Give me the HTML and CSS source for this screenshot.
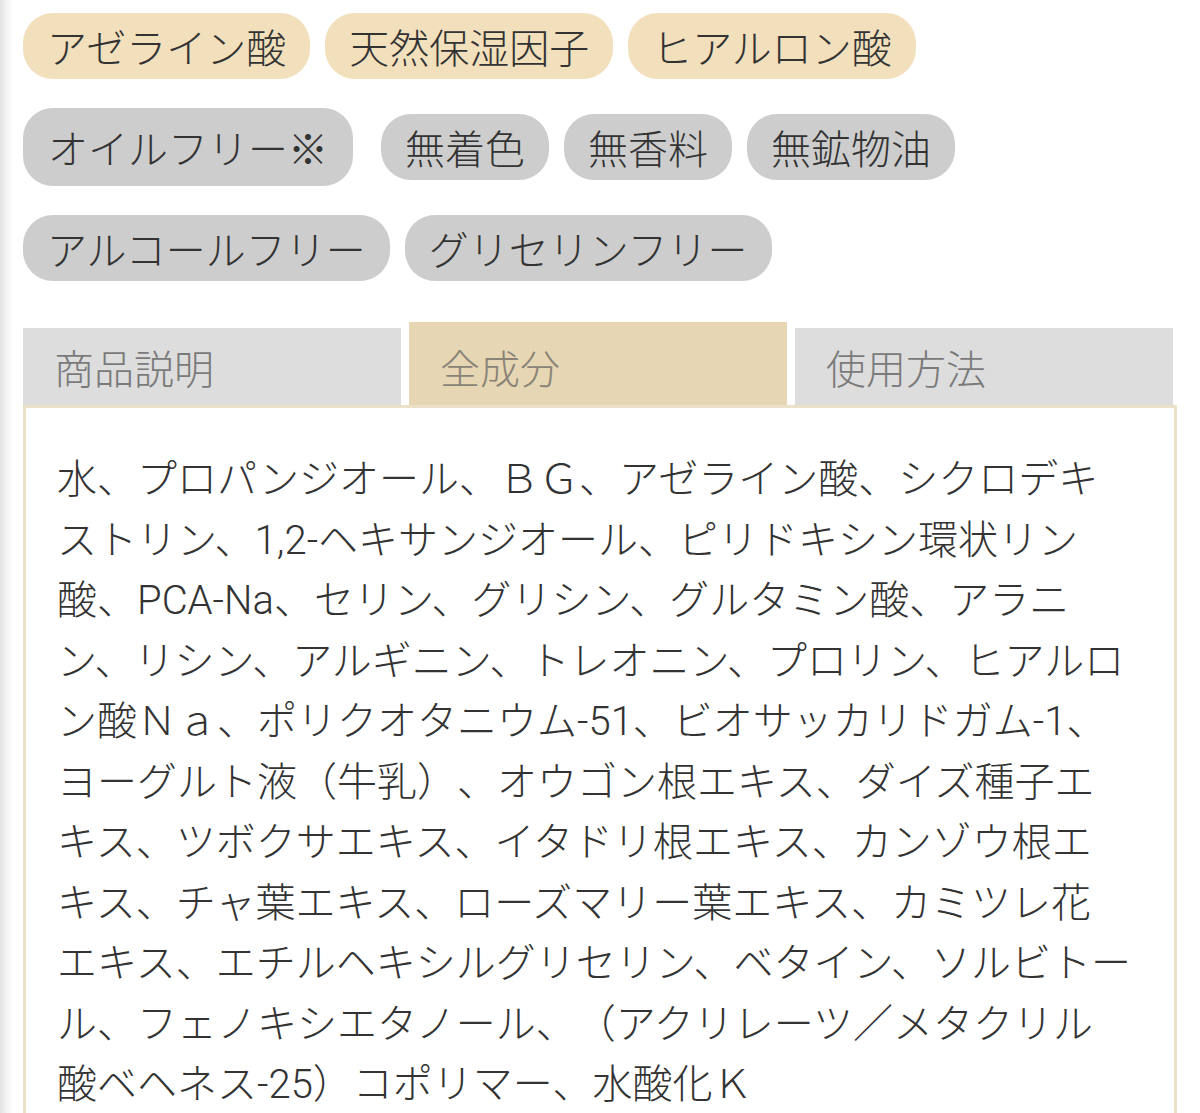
FILE: index.html
```html
<!DOCTYPE html>
<html lang="ja">
<head>
<meta charset="utf-8">
<title>全成分</title>
<link rel="stylesheet" href="styles.css">
</head>
<body>
<div class="page">
  <div class="tags">
    <div class="tag-row">
      <span class="tag tag-key">アゼライン酸</span>
      <span class="tag tag-key">天然保湿因子</span>
      <span class="tag tag-key">ヒアルロン酸</span>
    </div>
    <div class="tag-row">
      <span class="tag tag-free tag-note">オイルフリー※</span>
      <span class="tag tag-free">無着色</span>
      <span class="tag tag-free">無香料</span>
      <span class="tag tag-free">無鉱物油</span>
    </div>
    <div class="tag-row">
      <span class="tag tag-free">アルコールフリー</span>
      <span class="tag tag-free">グリセリンフリー</span>
    </div>
  </div>

  <div class="tabs">
    <div class="tab">商品説明</div>
    <div class="tab tab-active">全成分</div>
    <div class="tab">使用方法</div>
  </div>

  <div class="panel">
    <p class="ingredients">水、プロパンジオール、ＢＧ、アゼライン酸、シクロデキ<br>ストリン、1,2-ヘキサンジオール、ピリドキシン環状リン<br>酸、PCA-Na、セリン、グリシン、グルタミン酸、アラニ<br>ン、リシン、アルギニン、トレオニン、プロリン、ヒアルロ<br>ン酸Ｎａ、ポリクオタニウム-51、ビオサッカリドガム-1、<br>ヨーグルト液（牛乳）、オウゴン根エキス、ダイズ種子エ<br>キス、ツボクサエキス、イタドリ根エキス、カンゾウ根エ<br>キス、チャ葉エキス、ローズマリー葉エキス、カミツレ花<br>エキス、エチルヘキシルグリセリン、ベタイン、ソルビトー<br>ル、フェノキシエタノール、（アクリレーツ／メタクリル<br>酸ベヘネス-25）コポリマー、水酸化Ｋ</p>
  </div>
</div>
</body>
</html>
```

FILE: styles.css
```css
html, body {
  margin: 0;
  padding: 0;
}

body {
  background: linear-gradient(to right, #e2e2e2 0, #f3f3f3 6px, #ffffff 14px) no-repeat;
  background-color: #ffffff;
  font-family: "Noto Sans CJK JP", "Noto Sans", sans-serif;
  font-weight: 300;
  color: #333333;
  min-height: 1113px;
  text-spacing-trim: space-all;
}

.page {
  padding: 13px 23px 0 23px;
}

.tags {
  display: flex;
  flex-direction: column;
  gap: 29px;
}

.tag-row {
  display: flex;
  align-items: center;
  gap: 15px;
}

.tag {
  display: inline-block;
  font-size: 40px;
  line-height: 48px;
  padding: 9px 24px;
  border-radius: 30px;
  color: #333333;
  white-space: nowrap;
}

.tag-key {
  background: #f2dfbc;
}

.tag-free {
  background: #cdcdcd;
}

.tag-note {
  padding: 15px 25px;
  margin-right: 13px;
}

.tabs {
  display: flex;
  align-items: flex-end;
  gap: 8px;
  margin-top: 41px;
  width: 1150px;
}

.tab {
  flex: 1;
  height: 77px;
  box-sizing: border-box;
  display: flex;
  align-items: center;
  padding-left: 31px;
  background: #dddddd;
  color: #7a7a7a;
  font-size: 40px;
}

.tab-active {
  height: 83px;
  padding-top: 6px;
  background: #e6d6b4;
  color: #8a8478;
}

.panel {
  border: 3px solid #ebe1c8;
  border-bottom: none;
  padding: 42px 20px 40px 31px;
  min-height: 700px;
}

.ingredients {
  margin: 0;
  font-family: Roboto, "Noto Sans CJK JP", sans-serif;
  font-weight: 300;
  font-size: 40px;
  line-height: 60.5px;
  color: #333333;
  white-space: nowrap;
}
```
